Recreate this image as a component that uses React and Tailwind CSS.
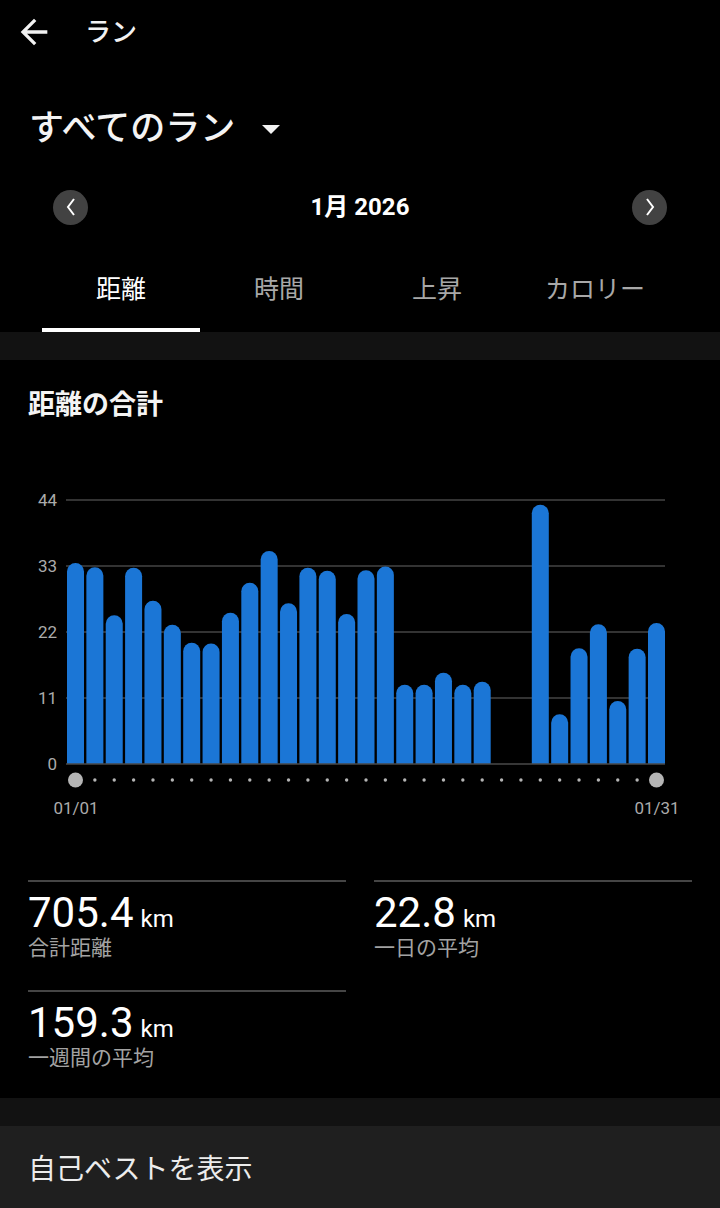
import React from "react";

const VALUES = [
  33.5, 32.8, 24.8, 32.7, 27.2, 23.2, 20.2, 20.1, 25.2, 30.2, 35.5, 26.8, 32.7,
  32.2, 25, 32.3, 32.9, 13.2, 13.2, 15.2, 13.2, 13.7, 0, 0, 43.2, 8.3, 19.3,
  23.3, 10.5, 19.2, 23.5,
];

function Chart() {
  const base = 314;
  const step = (648 - 67) / 30;
  const w = 17;
  const r = 8.5;
  const grid = [
    { v: "44", y: 50 },
    { v: "33", y: 116 },
    { v: "22", y: 182 },
    { v: "11", y: 248 },
  ];
  return (
    <svg width="720" height="380" viewBox="0 0 720 380" className="block">
      {grid.map((g) => (
        <g key={g.v}>
          <line x1="66" x2="665" y1={g.y} y2={g.y} stroke="#444" strokeWidth="1.5" />
          <text x="57" y={g.y + 6} textAnchor="end" fill="#ababab" fontSize="17" fontFamily="Roboto, sans-serif">
            {g.v}
          </text>
        </g>
      ))}
      <text x="57" y={base + 6} textAnchor="end" fill="#ababab" fontSize="17" fontFamily="Roboto, sans-serif">
        0
      </text>
      {VALUES.map((v, i) => {
        if (!v) return null;
        const x = 67 + i * step;
        const top = base - v * 6;
        const d = `M${x},${base} L${x},${top + r} A${r},${r} 0 0 1 ${x + w},${top + r} L${x + w},${base} Z`;
        return <path key={i} d={d} fill="#1b76d6" />;
      })}
      <line x1="66" x2="665" y1={base} y2={base} stroke="#4a4a4a" strokeWidth="1.5" />
      {VALUES.map((v, i) => {
        const cx = 67 + i * step + w / 2;
        if (i === 0 || i === 30) return <circle key={i} cx={cx} cy="330" r="7.5" fill="#b5b5b5" />;
        return <circle key={i} cx={cx} cy="330" r="1.7" fill="#b5b5b5" />;
      })}
      <text x="76" y="364" textAnchor="middle" fill="#ababab" fontSize="17" fontFamily="Roboto, sans-serif">
        01/01
      </text>
      <text x="657" y="364" textAnchor="middle" fill="#ababab" fontSize="17" fontFamily="Roboto, sans-serif">
        01/31
      </text>
    </svg>
  );
}

function Stat({ value, label }) {
  return (
    <div className="h-[110px] border-t-2 border-[#454545] pt-[9px]">
      <div className="flex items-baseline">
        <span className="text-[42px] leading-[44px] text-white">{value}</span>
        <span className="ml-[7px] text-[24px] leading-[44px] text-white">km</span>
      </div>
      <div className="-mt-[5px] text-[21px] leading-[25px] text-[#a3a3a3]">{label}</div>
    </div>
  );
}

export default function App() {
  const tabs = ["距離", "時間", "上昇", "カロリー"];
  return (
    <div className="w-[720px] h-[1208px] overflow-hidden bg-black text-white font-[Roboto,'Noto_Sans_CJK_JP',sans-serif]">
      {/* Header */}
      <div className="h-[64px] flex items-center pl-[14px]">
        <svg width="40" height="40" viewBox="0 0 24 24" className="block">
          <path d="M20 11H7.83l5.59-5.59L12 4l-8 8 8 8 1.41-1.41L7.83 13H20v-2z" fill="#f2f2f2" />
        </svg>
        <span className="ml-[31px] text-[26px] font-medium leading-none text-[#f2f2f2]">ラン</span>
      </div>

      {/* Title */}
      <div className="h-[112px] pt-[16px] flex items-center pl-[29px]">
        <span className="text-[35px] font-medium leading-none text-[#f4f4f4]">すべてのラン</span>
        <svg width="18" height="9" viewBox="0 0 18 9" className="ml-[27px] mt-[2px] block">
          <polygon points="0,0 18,0 9,9" fill="#f2f2f2" />
        </svg>
      </div>

      {/* Date nav */}
      <div className="h-[62px] flex items-center justify-between px-[53px]">
        <div className="w-[35px] h-[35px] rounded-full bg-[#424242] flex items-center justify-center">
          <svg width="12" height="20" viewBox="0 0 12 20">
            <polyline points="9,2 3,10 9,18" fill="none" stroke="#fff" strokeWidth="2" />
          </svg>
        </div>
        <span className="text-[24px] font-bold leading-none text-white">1月 2026</span>
        <div className="w-[35px] h-[35px] rounded-full bg-[#424242] flex items-center justify-center">
          <svg width="12" height="20" viewBox="0 0 12 20">
            <polyline points="3,2 9,10 3,18" fill="none" stroke="#fff" strokeWidth="2" />
          </svg>
        </div>
      </div>

      {/* Tabs */}
      <div className="h-[94px] flex pl-[42px]">
        {tabs.map((t, i) => (
          <div key={t} className="relative w-[158px] flex items-center justify-center pt-[9px]">
            <span className={`text-[25px] leading-none ${i === 0 ? "text-white" : "text-[#a8a8a8]"}`}>{t}</span>
            {i === 0 && <div className="absolute bottom-0 left-0 right-0 h-[4px] bg-white" />}
          </div>
        ))}
      </div>

      <div className="h-[28px] bg-[#121212]" />

      {/* Card */}
      <div className="h-[738px] overflow-hidden bg-black">
        <div className="h-[90px] flex items-center px-[28px]">
          <span className="text-[27px] font-bold leading-none text-[#f4f4f4]">距離の合計</span>
        </div>
        <Chart />
        <div className="mt-[50px] grid grid-cols-2 gap-x-[28px] px-[28px]">
          <Stat value="705.4" label="合計距離" />
          <Stat value="22.8" label="一日の平均" />
          <Stat value="159.3" label="一週間の平均" />
        </div>
      </div>

      <div className="h-[28px] bg-[#121212]" />

      <div className="h-[82px] bg-[#1f1f1f] flex items-center px-[28px] pt-[6px]">
        <span className="text-[28px] leading-none text-[#ececec]">自己ベストを表示</span>
      </div>
    </div>
  );
}
